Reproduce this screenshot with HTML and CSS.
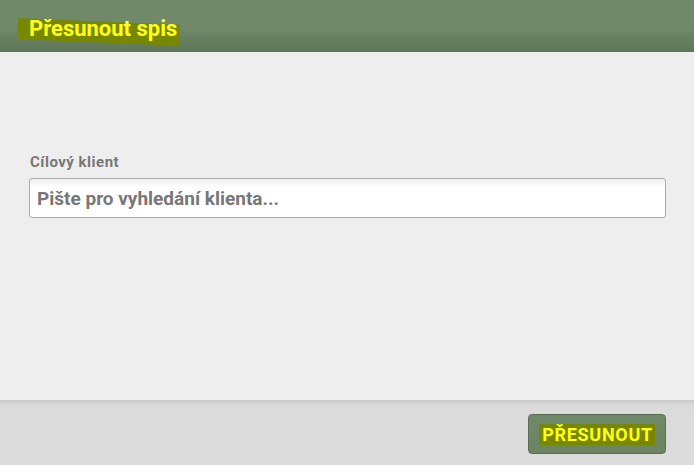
FILE: index.html
```html
<!DOCTYPE html>
<html lang="cs">
<head>
<meta charset="utf-8">
<title>Přesunout spis</title>
<link rel="stylesheet" href="styles.css">
</head>
<body>
<div class="dialog">
  <header class="head">
    <h1 class="title"><span class="mark-tilt"></span><span class="title-text">Přesunout spis</span></h1>
  </header>
  <main class="content">
    <label class="label" for="klient">Cílový klient</label>
    <input class="field" id="klient" type="text" placeholder="Pište pro vyhledání klienta...">
  </main>
  <footer class="foot">
    <button class="btn" type="button"><span class="mark">PŘESUNOUT</span></button>
  </footer>
</div>
</body>
</html>
```
FILE: styles.css
```css
* { box-sizing: border-box; }
html, body { margin: 0; padding: 0; }
body {
  width: 694px;
  height: 465px;
  overflow: hidden;
  font-family: Roboto, "DejaVu Sans", sans-serif;
  background: #eeeeee;
}
.dialog {
  display: flex;
  flex-direction: column;
  height: 465px;
}
.head {
  height: 52px;
  flex: none;
  background: linear-gradient(to bottom, #6f8969 0%, #6f8969 55%, #5f7559 100%);
  padding: 17px 0 0 18px;
}
.title {
  margin: 0;
  position: relative;
  display: inline-block;
  font-size: 22px;
  font-weight: 700;
  line-height: 24px;
  color: #ffff1a;
  padding: 0 0 0 11px;
}
.mark-tilt {
  position: absolute;
  left: 0;
  top: 1px;
  width: 162px;
  height: 21px;
  background: #778800;
  transform: rotate(2.4deg);
  transform-origin: 0 0;
}
.title-text { position: relative; }
.content {
  flex: 1;
  background: #eeeeee;
  padding: 102px 28px 0 29px;
  display: flex;
  flex-direction: column;
}
.label {
  font-size: 15px;
  font-weight: 700;
  letter-spacing: 0.5px;
  color: #777777;
  line-height: 16px;
  margin-left: 1px;
  margin-bottom: 8px;
}
.field {
  width: 637px;
  height: 40px;
  border: 1px solid #ababab;
  border-radius: 3px;
  background: linear-gradient(to bottom, #efefef 0, #ffffff 8px);
  padding: 0 7px;
  font-family: Roboto, "DejaVu Sans", sans-serif;
  font-size: 19px;
  font-weight: 700;
  color: #555;
  outline: none;
}
.field::placeholder { color: #777777; opacity: 1; }
.foot {
  height: 65px;
  flex: none;
  background: linear-gradient(to bottom, #c8c8c8 0, #dbdbdb 5px, #dcdcdc 100%);
  display: flex;
  justify-content: flex-end;
  align-items: flex-start;
  padding: 14px 28px 0 0;
}
.btn {
  width: 138px;
  height: 40px;
  border: 1px solid #596d54;
  border-radius: 4px;
  background: linear-gradient(to bottom, #6f8a69, #6a8464);
  display: flex;
  align-items: center;
  justify-content: center;
  padding: 0;
  cursor: pointer;
}
.mark {
  background: #778800;
  color: #ffff1a;
  font-family: Roboto, "DejaVu Sans", sans-serif;
  font-size: 18px;
  font-weight: 700;
  letter-spacing: 0.7px;
  line-height: 21px;
  padding: 0 2px 0 3px;
}
```
